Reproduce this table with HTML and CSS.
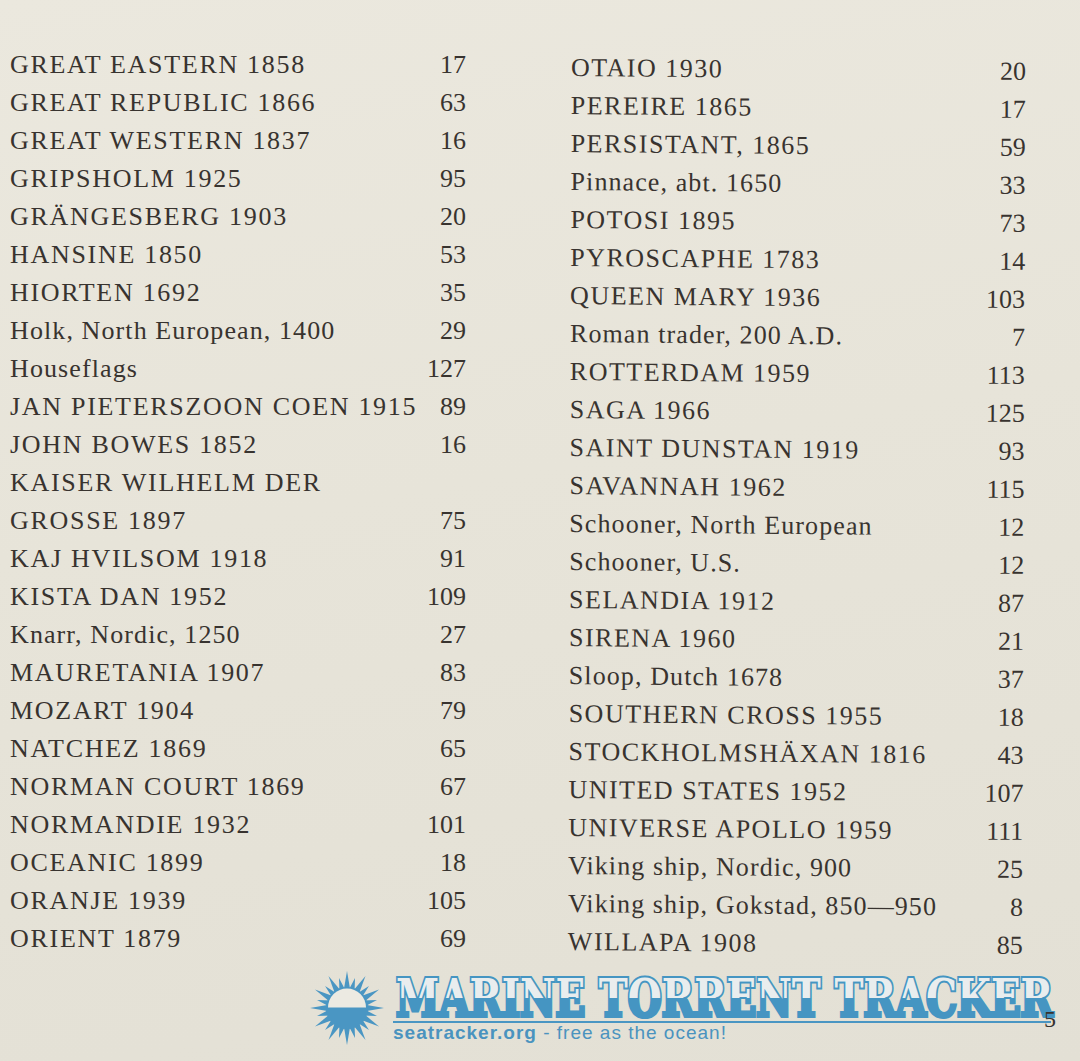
FILE: index.html
```html
<!DOCTYPE html>
<html lang="en">
<head>
<meta charset="utf-8">
<title>Index</title>
<link rel="stylesheet" href="styles.css">
</head>
<body>
<div class="page">
  <div class="index">
    <ul class="col col-left">
      <li class="row"><span>GREAT EASTERN 1858</span><span class="pg">17</span></li>
      <li class="row"><span>GREAT REPUBLIC 1866</span><span class="pg">63</span></li>
      <li class="row"><span>GREAT WESTERN 1837</span><span class="pg">16</span></li>
      <li class="row"><span>GRIPSHOLM 1925</span><span class="pg">95</span></li>
      <li class="row"><span>GRÄNGESBERG 1903</span><span class="pg">20</span></li>
      <li class="row"><span>HANSINE 1850</span><span class="pg">53</span></li>
      <li class="row"><span>HIORTEN 1692</span><span class="pg">35</span></li>
      <li class="row lc"><span>Holk, North European, 1400</span><span class="pg">29</span></li>
      <li class="row lc"><span>Houseflags</span><span class="pg">127</span></li>
      <li class="row"><span>JAN PIETERSZOON COEN 1915</span><span class="pg">89</span></li>
      <li class="row"><span>JOHN BOWES 1852</span><span class="pg">16</span></li>
      <li class="row"><span>KAISER WILHELM DER</span></li>
      <li class="row"><span>GROSSE 1897</span><span class="pg">75</span></li>
      <li class="row"><span>KAJ HVILSOM 1918</span><span class="pg">91</span></li>
      <li class="row"><span>KISTA DAN 1952</span><span class="pg">109</span></li>
      <li class="row lc"><span>Knarr, Nordic, 1250</span><span class="pg">27</span></li>
      <li class="row"><span>MAURETANIA 1907</span><span class="pg">83</span></li>
      <li class="row"><span>MOZART 1904</span><span class="pg">79</span></li>
      <li class="row"><span>NATCHEZ 1869</span><span class="pg">65</span></li>
      <li class="row"><span>NORMAN COURT 1869</span><span class="pg">67</span></li>
      <li class="row"><span>NORMANDIE 1932</span><span class="pg">101</span></li>
      <li class="row"><span>OCEANIC 1899</span><span class="pg">18</span></li>
      <li class="row"><span>ORANJE 1939</span><span class="pg">105</span></li>
      <li class="row"><span>ORIENT 1879</span><span class="pg">69</span></li>
    </ul>
    <ul class="col col-right">
      <li class="row"><span>OTAIO 1930</span><span class="pg">20</span></li>
      <li class="row"><span>PEREIRE 1865</span><span class="pg">17</span></li>
      <li class="row"><span>PERSISTANT, 1865</span><span class="pg">59</span></li>
      <li class="row lc"><span>Pinnace, abt. 1650</span><span class="pg">33</span></li>
      <li class="row"><span>POTOSI 1895</span><span class="pg">73</span></li>
      <li class="row"><span>PYROSCAPHE 1783</span><span class="pg">14</span></li>
      <li class="row"><span>QUEEN MARY 1936</span><span class="pg">103</span></li>
      <li class="row lc"><span>Roman trader, 200 A.D.</span><span class="pg">7</span></li>
      <li class="row"><span>ROTTERDAM 1959</span><span class="pg">113</span></li>
      <li class="row"><span>SAGA 1966</span><span class="pg">125</span></li>
      <li class="row"><span>SAINT DUNSTAN 1919</span><span class="pg">93</span></li>
      <li class="row"><span>SAVANNAH 1962</span><span class="pg">115</span></li>
      <li class="row lc"><span>Schooner, North European</span><span class="pg">12</span></li>
      <li class="row lc"><span>Schooner, U.S.</span><span class="pg">12</span></li>
      <li class="row"><span>SELANDIA 1912</span><span class="pg">87</span></li>
      <li class="row"><span>SIRENA 1960</span><span class="pg">21</span></li>
      <li class="row lc"><span>Sloop, Dutch 1678</span><span class="pg">37</span></li>
      <li class="row"><span>SOUTHERN CROSS 1955</span><span class="pg">18</span></li>
      <li class="row"><span>STOCKHOLMSHÄXAN 1816</span><span class="pg">43</span></li>
      <li class="row"><span>UNITED STATES 1952</span><span class="pg">107</span></li>
      <li class="row"><span>UNIVERSE APOLLO 1959</span><span class="pg">111</span></li>
      <li class="row lc"><span>Viking ship, Nordic, 900</span><span class="pg">25</span></li>
      <li class="row lc"><span>Viking ship, Gokstad, 850—950</span><span class="pg">8</span></li>
      <li class="row"><span>WILLAPA 1908</span><span class="pg">85</span></li>
    </ul>
  </div>

  <footer class="brand">
    <svg class="sun" width="76" height="76" viewBox="-38 -38 76 76" aria-hidden="true">
      <defs>
        <polygon id="spL" points="-3.4,-17 0,-37 3.4,-17"/>
        <polygon id="spS" points="-3.2,-17 0,-31 3.2,-17"/>
      </defs>
      <g fill="#4a96c3">
        <use href="#spL" transform="rotate(0)"/>
        <use href="#spS" transform="rotate(15)"/>
        <use href="#spL" transform="rotate(30)"/>
        <use href="#spS" transform="rotate(45)"/>
        <use href="#spL" transform="rotate(60)"/>
        <use href="#spS" transform="rotate(75)"/>
        <use href="#spL" transform="rotate(90)"/>
        <use href="#spS" transform="rotate(105)"/>
        <use href="#spL" transform="rotate(120)"/>
        <use href="#spS" transform="rotate(135)"/>
        <use href="#spL" transform="rotate(150)"/>
        <use href="#spS" transform="rotate(165)"/>
        <use href="#spL" transform="rotate(180)"/>
        <use href="#spS" transform="rotate(195)"/>
        <use href="#spL" transform="rotate(210)"/>
        <use href="#spS" transform="rotate(225)"/>
        <use href="#spL" transform="rotate(240)"/>
        <use href="#spS" transform="rotate(255)"/>
        <use href="#spL" transform="rotate(270)"/>
        <use href="#spS" transform="rotate(285)"/>
        <use href="#spL" transform="rotate(300)"/>
        <use href="#spS" transform="rotate(315)"/>
        <use href="#spL" transform="rotate(330)"/>
        <use href="#spS" transform="rotate(345)"/>
        <circle cx="0" cy="0" r="21"/>
      </g>
      <path d="M-19,-0.5 A19,19 0 0 1 19,-0.5 Z" fill="#eceae2"/>
    </svg>
    <div class="brand-text">
      <svg class="brand-name" width="664" height="64" viewBox="0 -9 664 64">
        <defs>
          <linearGradient id="twoTone" x1="0" y1="0" x2="0" y2="46" gradientUnits="userSpaceOnUse">
            <stop offset="0" stop-color="#e9edee"/>
            <stop offset="0.53" stop-color="#e9edee"/>
            <stop offset="0.53" stop-color="#4595c2"/>
            <stop offset="1" stop-color="#4595c2"/>
          </linearGradient>
        </defs>
        <text x="3" y="42" textLength="657" lengthAdjust="spacingAndGlyphs" class="brand-word">MARINE TORRENT TRACKER</text>
      </svg>
      <div class="brand-rule"></div>
      <p class="brand-tag"><b>seatracker.org</b> - free as the ocean!</p>
    </div>
    <span class="folio">5</span>
  </footer>
</div>
</body>
</html>
```

FILE: styles.css
```css
html, body {
  margin: 0;
  padding: 0;
}

body {
  background: #e7e4d9;
  width: 1080px;
  height: 1061px;
  overflow: hidden;
}

.page {
  position: relative;
  width: 1080px;
  height: 1061px;
  background: linear-gradient(170deg, #ebe8de 0%, #e7e4d9 45%, #e3e0d5 100%);
  font-family: "Liberation Serif", "Times New Roman", serif;
  color: #38332f;
}

.index {
  display: flex;
  padding: 46px 0 0 10px;
}

.col {
  list-style: none;
  margin: 0;
  padding: 0;
}

.col-left {
  width: 456px;
}

.col-right {
  width: 455px;
  margin-left: 105px;
  margin-top: 3px;
  transform: skew(-0.2deg, 0.5deg);
  transform-origin: left top;
}

.row {
  display: flex;
  justify-content: space-between;
  height: 38px;
  line-height: 38px;
  font-size: 26px;
  letter-spacing: 1.7px;
  white-space: nowrap;
}

.col-right .row {
  letter-spacing: 1.5px;
}

.row.lc,
.col-right .row.lc {
  letter-spacing: 1.1px;
}

.pg {
  letter-spacing: 0;
}

.brand {
  display: flex;
  align-items: flex-start;
  gap: 8px;
  padding-left: 309px;
  margin-top: 9px;
}

.sun {
  display: block;
  flex: none;
}

.brand-text {
  display: flex;
  flex-direction: column;
  padding-top: 4px;
}

.brand-name {
  display: block;
  margin: -9px 0 -9px 0;
}

.brand-word {
  font-family: "DejaVu Serif Condensed", "DejaVu Serif", serif;
  font-weight: bold;
  font-size: 53px;
  fill: url(#twoTone);
  stroke: #4595c2;
  stroke-width: 4;
  stroke-linejoin: miter;
  paint-order: stroke;
}

.brand-rule {
  height: 2px;
  width: 658px;
  background: #4a96c3;
  margin-top: 1px;
}

.brand-tag {
  margin: 0;
  font-family: "Liberation Sans", Arial, sans-serif;
  font-size: 19px;
  line-height: 20px;
  letter-spacing: 1px;
  color: #4a93bf;
}

.brand-tag b {
  font-weight: bold;
}

.folio {
  position: absolute;
  left: 1044px;
  top: 1007px;
  font-family: "Liberation Serif", "Times New Roman", serif;
  font-size: 24px;
  line-height: 24px;
  color: #38332f;
}
```
